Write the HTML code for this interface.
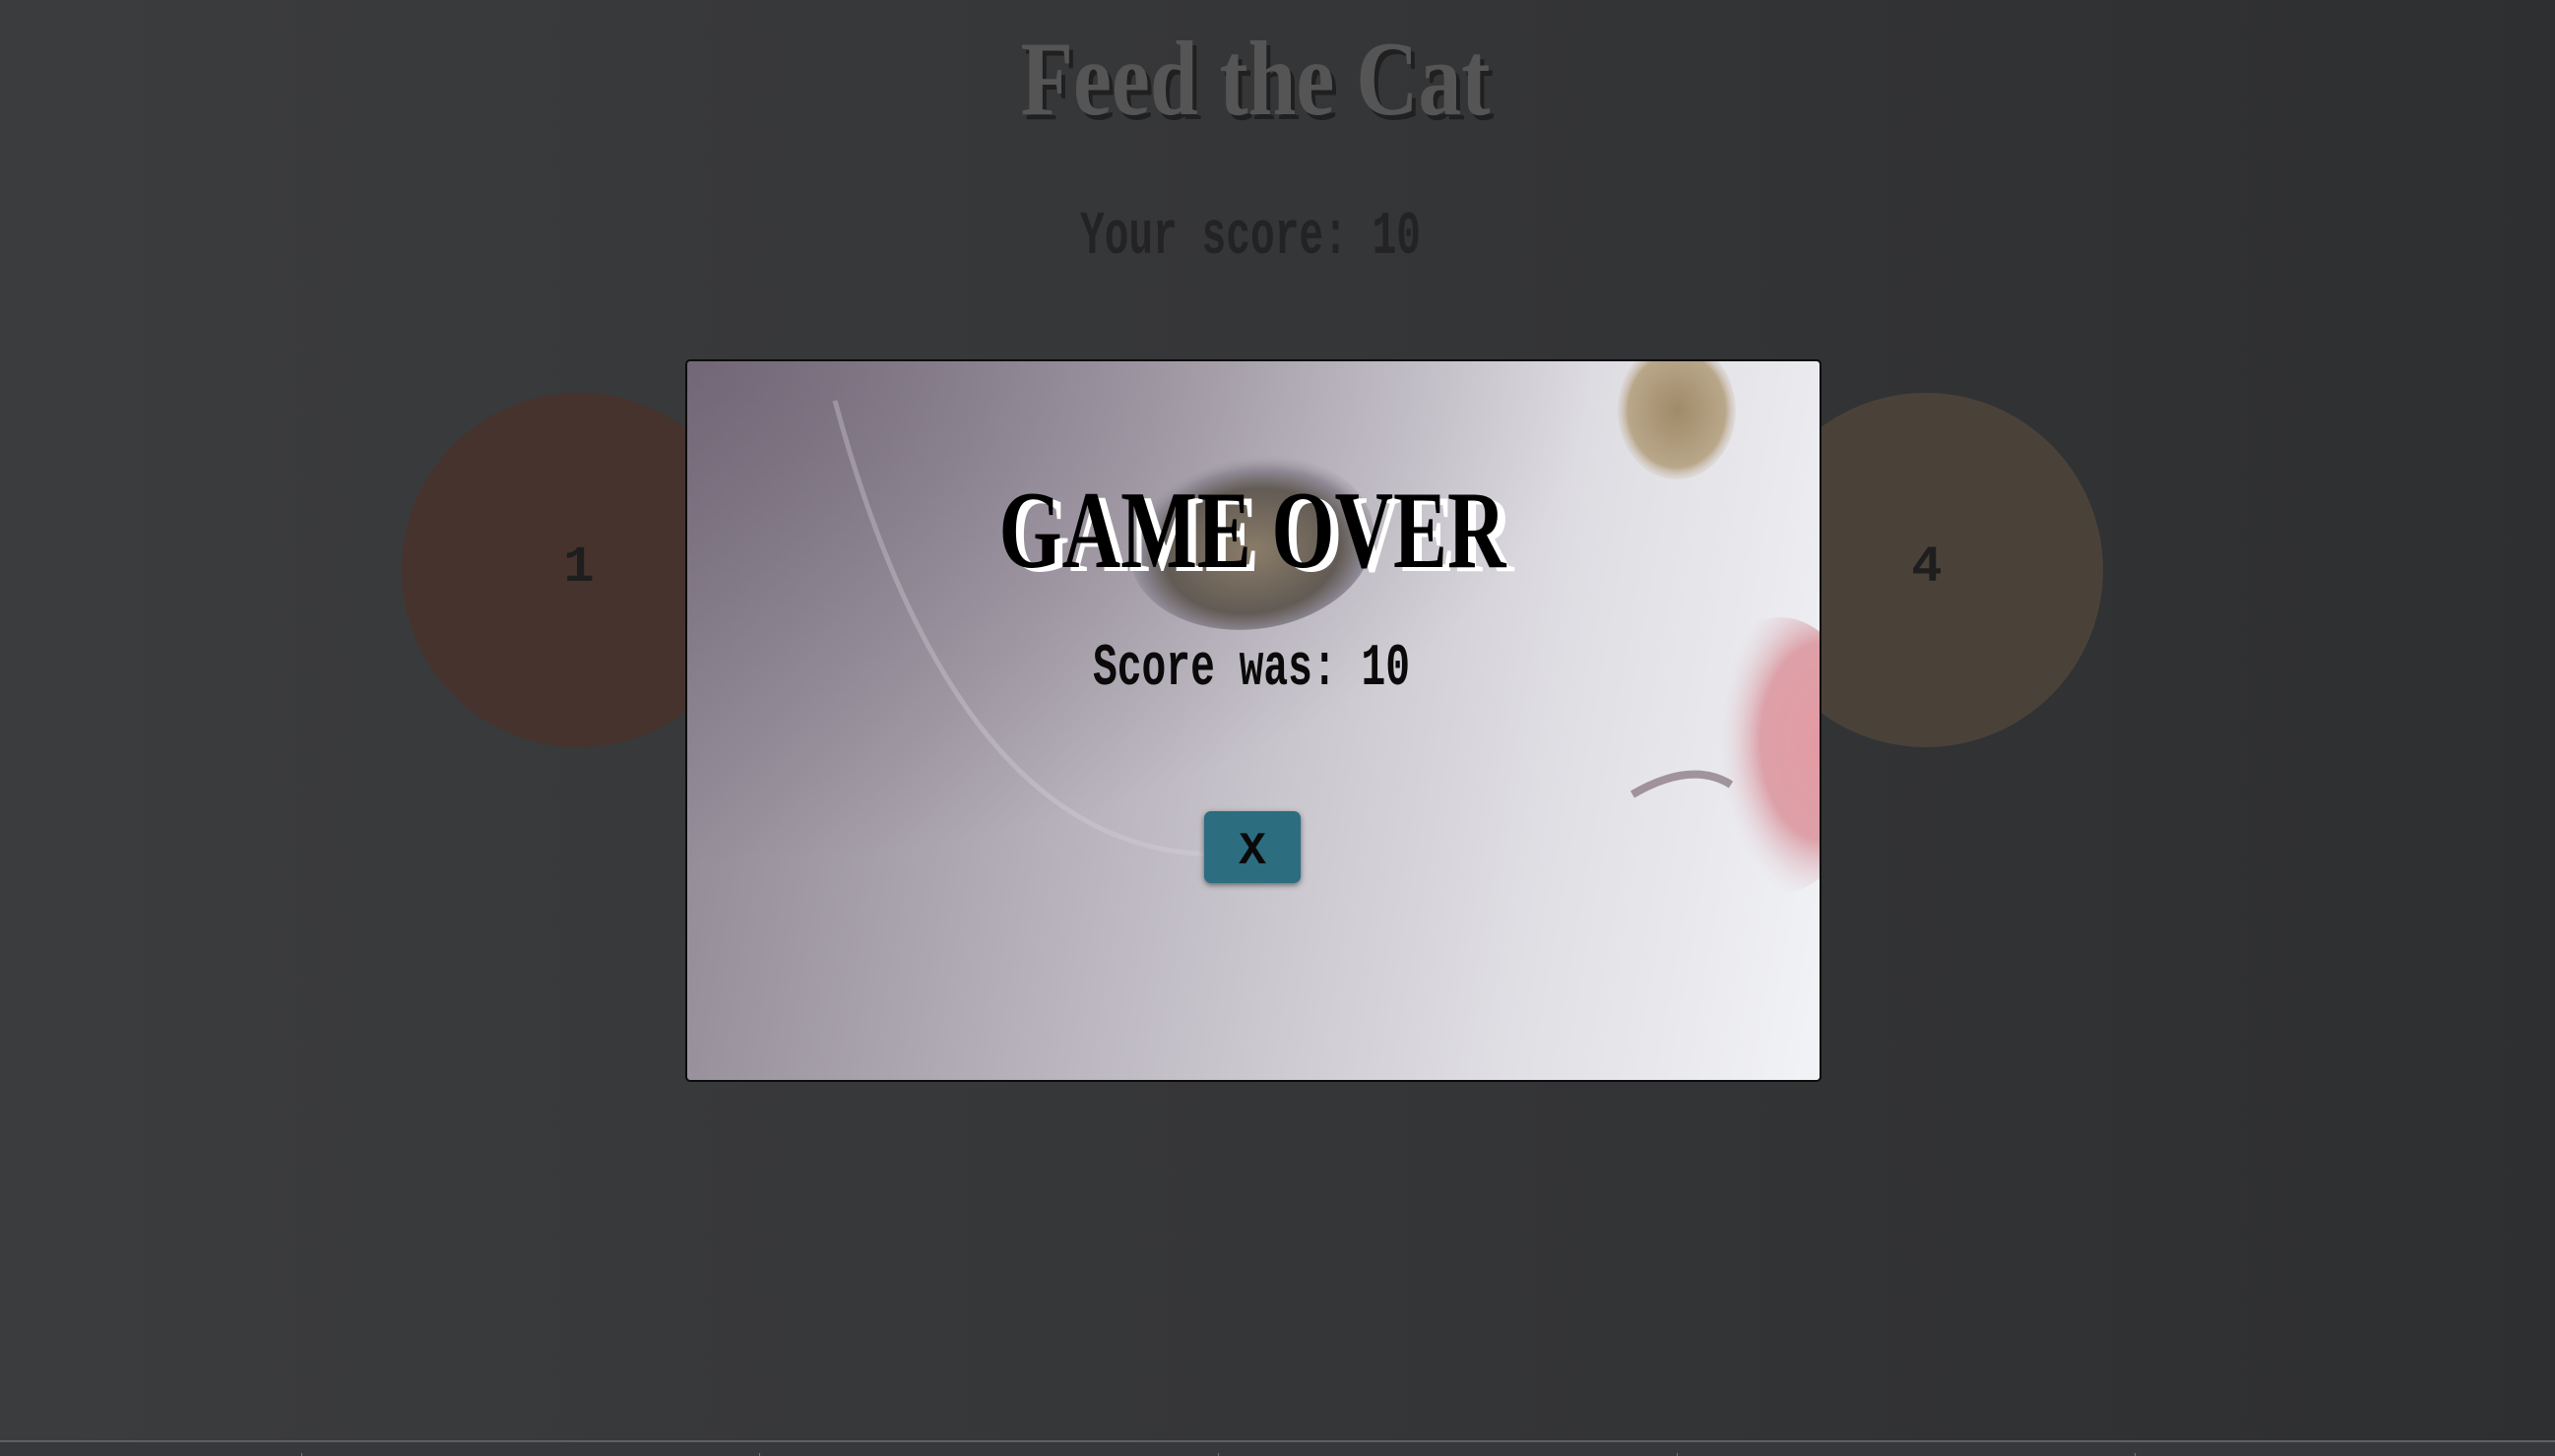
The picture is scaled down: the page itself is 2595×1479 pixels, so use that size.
<!DOCTYPE html>
<html><head><meta charset="utf-8"><style>
html,body{margin:0;padding:0}
body{width:2595px;height:1479px;overflow:hidden;position:relative;background:linear-gradient(90deg,#3b3c3e 0%,#353638 50%,#2e2f31 100%);font-family:"Liberation Mono",monospace}
.c{position:absolute;border-radius:50%;width:360px;height:360px;top:399px}
.bar{position:absolute;left:0;right:0;top:1463px;height:2px;background:#5f6063}
.strip{position:absolute;left:0;right:0;top:1465px;height:14px;background:#37383b}
.tick{position:absolute;top:1476px;width:1px;height:3px;background:#777}
#modal{position:absolute;left:696px;top:365px;width:1150px;height:730px;border:2px solid #0c0c0c;border-radius:5px;overflow:hidden;
background:linear-gradient(100deg,#8d8692 0%,#a9a3ad 25%,#c6c2ca 50%,#e0dfe4 75%,#f2f3f6 100%)}
#x{position:absolute;left:1223px;top:824px;width:98px;height:73px;background:#2c6d80;border-radius:7px;box-shadow:0 2px 6px rgba(0,0,0,.5)}
</style></head><body>
<svg width="2595" height="1479" style="position:absolute;left:0;top:0">
<text x="1275" y="116" text-anchor="middle" font-family="Liberation Serif" font-weight="bold" font-size="108" fill="#202020" textLength="477" lengthAdjust="spacingAndGlyphs" transform="translate(4,5)">Feed the Cat</text>
<text x="1275" y="116" text-anchor="middle" font-family="Liberation Serif" font-weight="bold" font-size="108" fill="#555555" textLength="477" lengthAdjust="spacingAndGlyphs">Feed the Cat</text>
<text x="1270" y="257" text-anchor="middle" font-family="Liberation Mono" font-weight="bold" font-size="62" fill="#232323" textLength="346" lengthAdjust="spacingAndGlyphs">Your score: 10</text>
</svg>
<div class="c" style="left:408px;background:#47332d"></div>
<div class="c" style="left:1776px;background:#4a4239"></div>
<svg width="2595" height="1479" style="position:absolute;left:0;top:0">
<text x="588" y="590" text-anchor="middle" font-family="Liberation Mono" font-weight="bold" font-size="52" fill="#1e1e1e">1</text>
<text x="1957" y="590" text-anchor="middle" font-family="Liberation Mono" font-weight="bold" font-size="52" fill="#1e1e1e">4</text>
</svg>
<div id="modal">
<svg width="1150" height="730" style="position:absolute;left:0;top:0">
<defs>
<radialGradient id="e1" cx="50%" cy="55%" r="55%"><stop offset="0" stop-color="#8a7c68"/><stop offset=".65" stop-color="#625b55"/><stop offset=".85" stop-color="#8f8a96"/><stop offset="1" stop-color="#a9a3ad" stop-opacity="0"/></radialGradient>
<radialGradient id="e2" cx="50%" cy="50%" r="55%"><stop offset="0" stop-color="#a08a68"/><stop offset=".75" stop-color="#b9a78a"/><stop offset="1" stop-color="#e2dee2" stop-opacity="0"/></radialGradient>
<radialGradient id="n" cx="75%" cy="45%" r="60%"><stop offset="0" stop-color="#e39aa3"/><stop offset=".6" stop-color="#dda0a8"/><stop offset="1" stop-color="#e0d8de" stop-opacity="0"/></radialGradient>
<radialGradient id="top" cx="0" cy="0" r="1"><stop offset="0" stop-color="#5e5264" stop-opacity=".6"/><stop offset="1" stop-color="#5e5264" stop-opacity="0"/></radialGradient>
</defs>
<rect x="0" y="0" width="1150" height="730" fill="url(#top)" transform="scale(0.8,0.7)"/>
<path d="M150 40 Q 280 520 560 500" stroke="#d8d4dc" stroke-width="5" fill="none" opacity=".35"/>
<ellipse cx="573" cy="184" rx="125" ry="88" transform="rotate(-8 573 184)" fill="url(#e1)"/>
<ellipse cx="1005" cy="50" rx="60" ry="70" fill="url(#e2)"/>
<ellipse cx="1110" cy="400" rx="90" ry="140" fill="url(#n)"/>
<path d="M960 440 Q 1020 405 1060 430" stroke="#5a4048" stroke-width="8" fill="none" opacity=".5"/>
</svg>
</div>
<svg width="2595" height="1479" style="position:absolute;left:0;top:0">
<text x="1275" y="576" text-anchor="middle" font-family="Liberation Serif" font-weight="bold" font-size="112" fill="#ffffff" textLength="515" lengthAdjust="spacingAndGlyphs" transform="translate(5,4)">GAME OVER</text>
<text x="1272" y="576" text-anchor="middle" font-family="Liberation Serif" font-weight="bold" font-size="112" fill="#000" textLength="515" lengthAdjust="spacingAndGlyphs">GAME OVER</text>
<text x="1271" y="695" text-anchor="middle" font-family="Liberation Mono" font-weight="bold" font-size="60" fill="#0a0a0a" textLength="322" lengthAdjust="spacingAndGlyphs">Score was: 10</text>
</svg>
<div id="x"></div>
<svg width="2595" height="1479" style="position:absolute;left:0;top:0">
<text x="1272" y="877" text-anchor="middle" font-family="Liberation Mono" font-weight="bold" font-size="46" fill="#0a0a0a">X</text>
</svg>
<div class="bar"></div><div class="strip"></div>
<div class="tick" style="left:306px"></div><div class="tick" style="left:771px"></div><div class="tick" style="left:1237px"></div><div class="tick" style="left:1703px"></div><div class="tick" style="left:2168px"></div>
</body></html>
